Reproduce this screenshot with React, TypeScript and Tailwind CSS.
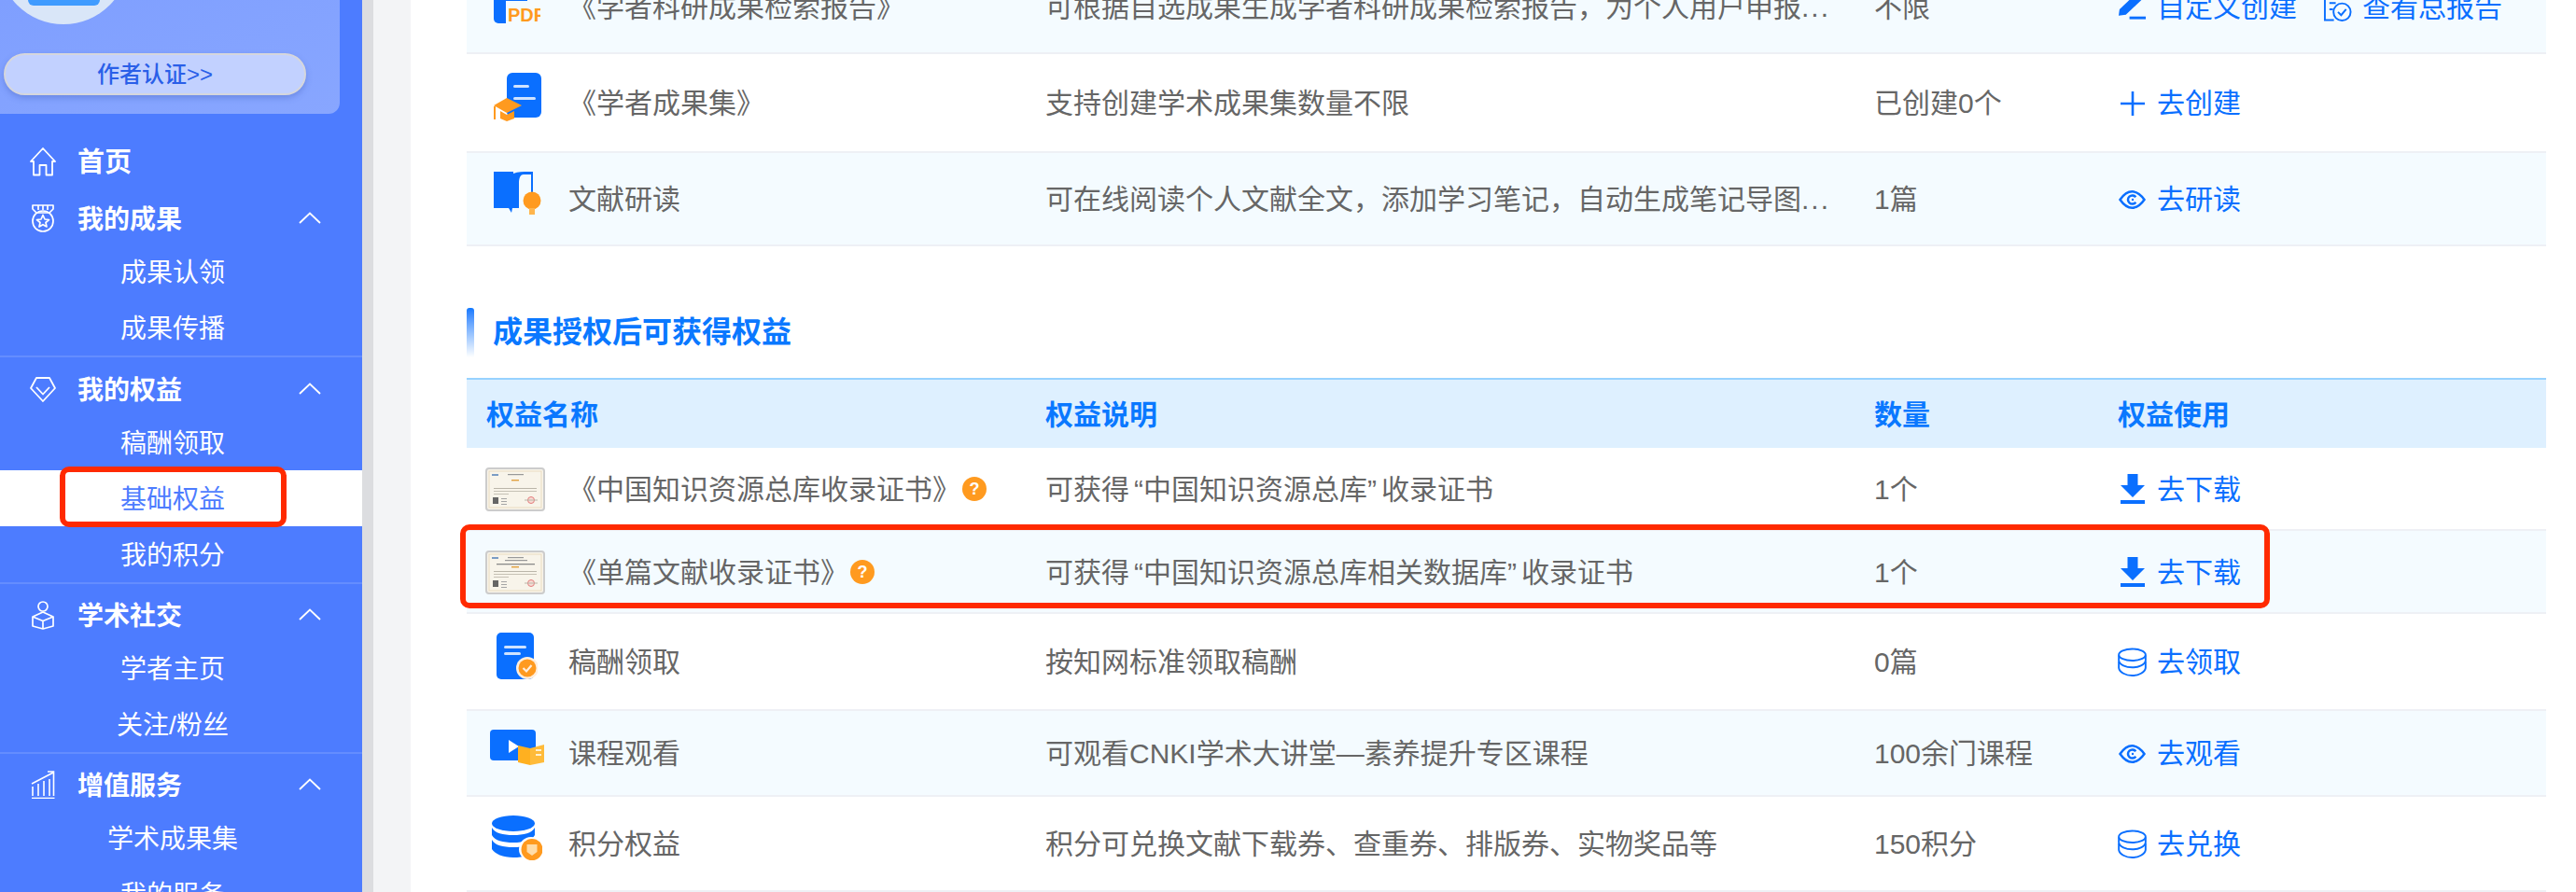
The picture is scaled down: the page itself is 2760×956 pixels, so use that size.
const ChevronUp = () => (
  <svg width="24" height="13" viewBox="0 0 24 13" fill="none" stroke="white" strokeWidth="1.8">
    <path d="M1 12 L12 1.5 L23 12" />
  </svg>
);

const HomeIcon = () => (
  <svg width="28" height="31" viewBox="0 0 28 31" fill="none" stroke="white" strokeWidth="1.8" strokeLinejoin="round">
    <path d="M14 1 L27 15 H24 V29.5 H17.5 V19 H10.5 V29.5 H4 V15 H1 Z" />
  </svg>
);

const MedalIcon = () => (
  <svg width="24" height="30" viewBox="0 0 24 30" fill="none" stroke="white" strokeWidth="1.7" strokeLinejoin="round">
    <path d="M1 1 H23 V5 L19 9 H5 L1 5 Z M7 1 V6 M12 1 V6 M17 1 V6" />
    <circle cx="12" cy="18" r="11" />
    <path d="M12 11.5 L14 16 L18.5 16.5 L15 19.5 L16 24 L12 21.7 L8 24 L9 19.5 L5.5 16.5 L10 16 Z" />
  </svg>
);

const GemIcon = () => (
  <svg width="28" height="27" viewBox="0 0 28 27" fill="none" stroke="white" strokeWidth="1.8" strokeLinejoin="round">
    <path d="M7 1 H21 L27 12 L14 26 L1 12 Z" />
    <path d="M7 11 L14 18.5 L21 11" />
  </svg>
);

const SocialIcon = () => (
  <svg width="24" height="31" viewBox="0 0 24 31" fill="none" stroke="white" strokeWidth="1.7" strokeLinejoin="round">
    <circle cx="12" cy="6" r="5" />
    <path d="M12 12 L23 17 V27 L12 30 L1 27 V17 Z" />
    <path d="M1 17 L12 21.5 L23 17 M12 21.5 V30" />
  </svg>
);

const ChartIcon = () => (
  <svg width="26" height="30" viewBox="0 0 26 30" fill="none" stroke="white" strokeWidth="1.6">
    <path d="M1 14 L24 2 M18 1 H24.5 V7" />
    <path d="M2 27 V17 M8 27 V14 M14 27 V11 M20 27 V9 M24.5 27 V7" />
    <path d="M1 29.5 H25.5" />
  </svg>
);

const PlusIcon = () => (
  <svg width="28" height="28" viewBox="0 0 28 28" fill="none" stroke="#0a6fff" strokeWidth="2.6">
    <path d="M14 1 V27 M1 14 H27" />
  </svg>
);

const EyeIcon = () => (
  <svg width="29" height="20" viewBox="0 0 29 20" fill="none" stroke="#0a6fff" strokeWidth="2.5" strokeLinejoin="miter">
    <path d="M1.5 10 C6 3.5 10 1.3 14.5 1.3 C19 1.3 23 3.5 27.5 10 C23 16.5 19 18.7 14.5 18.7 C10 18.7 6 16.5 1.5 10 Z" />
    <path d="M18.3 7.3 A4.6 4.6 0 1 0 18.3 12.7" />
    <circle cx="15" cy="10" r="1.2" fill="#0a6fff" stroke="none" />
  </svg>
);

const DownloadIcon = () => (
  <svg width="28" height="32" viewBox="0 0 28 32" fill="#0a6fff">
    <path d="M8.5 0 H19.5 V12 H27 L14 25 L1 12 H8.5 Z" />
    <rect x="1" y="28" width="26" height="4" />
  </svg>
);

const DatabaseIcon = () => (
  <svg width="32" height="32" viewBox="0 0 32 32" fill="none" stroke="#0a6fff" strokeWidth="2">
    <ellipse cx="16" cy="7.5" rx="14.8" ry="6.5" />
    <path d="M1.2 8 V14 C2 18.5 9 21.5 16 21.5 C23 21.5 30 18.5 30.8 14 V8" />
    <path d="M1.2 15 V22 C2 27 9 30.5 16 30.5 C23 30.5 30 27 30.8 22 V15" />
  </svg>
);

const PenIcon = () => (
  <svg width="32" height="32" viewBox="0 0 32 32" fill="#0a6fff">
    <path d="M20 1 L27 7 L9 24 L1 25 L2 18 Z" />
    <rect x="13" y="26" width="18" height="3" />
  </svg>
);

const ReportIcon = () => (
  <svg width="32" height="32" viewBox="0 0 32 32" fill="none" stroke="#0a6fff" strokeWidth="2">
    <path d="M22 3 H2 V30 H12" />
    <path d="M7 11 H14 M7 18 H11" />
    <circle cx="21" cy="21" r="9.5" />
    <path d="M16.5 21 L20 24.5 L25.5 18" />
  </svg>
);

const PdfIcon = () => (
  <svg width="50" height="48" viewBox="0 0 50 48">
    <rect x="0" y="0" width="36" height="48" rx="5" fill="#0a6fff" />
    <rect x="13" y="24" width="37" height="24" fill="#f4fbff" />
    <text x="15" y="46" fontSize="20" fontWeight="700" fill="#ff9a1f" fontFamily="Liberation Sans">PDF</text>
  </svg>
);

const HatIcon = () => (
  <svg width="52" height="52" viewBox="0 0 52 52">
    <rect x="15" y="0" width="37" height="48" rx="6" fill="#0a6fff" />
    <rect x="22" y="13" width="17" height="3" rx="1.5" fill="#cfe3ff" />
    <rect x="22" y="26" width="24" height="3" rx="1.5" fill="#cfe3ff" />
    <path d="M1 35 L15 27 L31 35 L15 43 Z" fill="#ff9a1f" />
    <path d="M8 41 L15 45 L23 41 V49 L15 52 L8 49 Z" fill="#ff9a1f" />
    <rect x="1" y="36" width="2" height="14" fill="#ff9a1f" />
  </svg>
);

const ReadIcon = () => (
  <svg width="51" height="46" viewBox="0 0 51 46">
    <path d="M0 0 H21 V39 H20 L19 44 L16 39 H0 Z" fill="#0a6fff" />
    <path d="M21 2 C26 0 32 0 36 0 H42 V22 H40 V3 H32 C28 3 27 8 27 12 V39 H21 Z" fill="#0a6fff" />
    <circle cx="41" cy="31" r="9.5" fill="#ff9a1f" />
    <rect x="38" y="39" width="6" height="7" fill="#ffb54d" />
  </svg>
);

const RewardIcon = () => (
  <svg width="44" height="50" viewBox="0 0 44 50">
    <rect x="0" y="0" width="40" height="50" rx="5" fill="#0a6fff" />
    <rect x="8" y="14" width="24" height="3" rx="1.5" fill="#cfe3ff" />
    <rect x="8" y="21" width="18" height="3" rx="1.5" fill="#cfe3ff" />
    <circle cx="33" cy="38" r="12" fill="#ffeedd" />
    <circle cx="33" cy="38" r="9.5" fill="#ff9a1f" />
    <path d="M28.5 38 L32 41.5 L37.5 35" fill="none" stroke="#ffeedd" strokeWidth="2.2" />
  </svg>
);

const CourseIcon = () => (
  <svg width="58" height="38" viewBox="0 0 58 38">
    <rect x="0" y="0" width="49" height="33" rx="4" fill="#0a6fff" />
    <path d="M20 11 L31 18 L20 25 Z" fill="white" />
    <path d="M30 17 L43 20 V38 L30 35 Z" fill="#ffb020" />
    <path d="M43 20 L58 16 V35 L43 38 Z" fill="#ffbb3a" />
    <rect x="49" y="21" width="6" height="2" fill="#fff0d0" />
    <rect x="49" y="26" width="6" height="2" fill="#fff0d0" />
  </svg>
);

const CoinDbIcon = () => (
  <svg width="54" height="48" viewBox="0 0 54 48">
    <ellipse cx="23" cy="8.5" rx="23" ry="8.5" fill="#0a6fff" />
    <path d="M0 13 C3 19 12 21 23 21 C34 21 43 19 46 13 V21 C43 27 34 29 23 29 C12 29 3 27 0 21 Z" fill="#0a6fff" />
    <path d="M0 26 C3 32 12 34 23 34 C34 34 43 32 46 26 V33 C43 43 34 45 23 45 C12 45 3 41 0 36 Z" fill="#0a6fff" />
    <circle cx="42" cy="36" r="13" fill="white" />
    <circle cx="43" cy="36.5" r="11.5" fill="#ff9a1f" />
    <path d="M37.5 31 H48.5 V39 L43 43 L37.5 39 Z" fill="#ffdca8" />
  </svg>
);

const Cert = ({ long }: { long?: boolean }) => (
  <svg width="64" height="47" viewBox="0 0 64 47" className="shrink-0">
    <rect x="1" y="1" width="62" height="45" rx="3" fill="#f8f4ea" stroke="#cccccc" strokeWidth="2" />
    <rect x="4" y="4" width="56" height="39" fill="none" stroke="#eadcc0" strokeWidth="1" />
    <rect x="7" y="7" width="7" height="2" fill="#7b9cc4" />
    <rect x="24" y="7" width="17" height="1.2" fill="#999999" />
    {long && <rect x="21" y="10" width="24" height="1.2" fill="#999999" />}
    {long && <rect x="12" y="14" width="41" height="1.3" fill="#8a8a8a" />}
    <rect x="28" y={long ? 17 : 13} width="8" height="1.4" fill="#e0a040" />
    <rect x="9" y="22" width="46" height="1" fill="#bbb6aa" />
    <rect x="9" y="25" width="46" height="1" fill="#c6c1b5" />
    <rect x="9" y="28" width="16" height="1" fill="#c6c1b5" />
    <rect x="8" y="32" width="6" height="7" fill="#666666" />
    <rect x="17" y="33" width="6" height="1" fill="#a5a5a5" />
    <rect x="17" y="36" width="6" height="1" fill="#a5a5a5" />
    <rect x="17" y="39" width="6" height="1" fill="#a5a5a5" />
    <circle cx="49" cy="35" r="3.5" fill="#f6dcd4" stroke="#e57b7b" strokeWidth="1" />
    <rect x="42" y="34.5" width="14" height="1" fill="#bbb6aa" />
  </svg>
);

const Help = () => (
  <span className="ml-[2px] flex h-[26px] w-[26px] shrink-0 items-center justify-center rounded-full bg-[#ff9a1f] text-[18px] font-bold leading-none text-white">
    ?
  </span>
);

const RedBox = ({ className }: { className: string }) => (
  <div className={`pointer-events-none absolute rounded-[10px] border-[6px] border-[#ff2a00] ${className}`} />
);

const topRows = [
  {
    icon: <PdfIcon />,
    name: "《学者科研成果检索报告》",
    desc: "可根据自选成果生成学者科研成果检索报告，为个人用户申报",
    more: true,
    count: "不限",
    h: "h-[100px]",
    bg: "bg-[#f4fbff]",
    actions: [
      { icon: <PenIcon />, label: "自定义创建" },
      { icon: <ReportIcon />, label: "查看总报告" },
    ],
  },
  {
    icon: <HatIcon />,
    name: "《学者成果集》",
    desc: "支持创建学术成果集数量不限",
    count: "已创建0个",
    h: "h-[106px]",
    bg: "bg-white",
    actions: [{ icon: <PlusIcon />, label: "去创建" }],
  },
  {
    icon: <ReadIcon />,
    name: "文献研读",
    desc: "可在线阅读个人文献全文，添加学习笔记，自动生成笔记导图",
    more: true,
    count: "1篇",
    h: "h-[100px]",
    bg: "bg-[#f4fbff]",
    actions: [{ icon: <EyeIcon />, label: "去研读" }],
  },
];

const bottomRows = [
  {
    icon: <RewardIcon />,
    name: "稿酬领取",
    desc: "按知网标准领取稿酬",
    count: "0篇",
    h: "h-[104px]",
    bg: "bg-white",
    actions: [{ icon: <DatabaseIcon />, label: "去领取" }],
  },
  {
    icon: <CourseIcon />,
    name: "课程观看",
    desc: "可观看CNKI学术大讲堂—素养提升专区课程",
    count: "100余门课程",
    h: "h-[92px]",
    bg: "bg-[#f4fbff]",
    actions: [{ icon: <EyeIcon />, label: "去观看" }],
  },
  {
    icon: <CoinDbIcon />,
    name: "积分权益",
    desc: "积分可兑换文献下载券、查重券、排版券、实物奖品等",
    count: "150积分",
    h: "h-[102px]",
    bg: "bg-white",
    actions: [{ icon: <DatabaseIcon />, label: "去兑换" }],
  },
];

type RowData = (typeof topRows)[number];

const grid = "grid grid-cols-[620px_888px_261px_459px] items-center pt-[1px]";

const Actions = ({ items }: { items: RowData["actions"] }) => (
  <div className="flex items-center gap-[28px] text-[#0a6fff]">
    {items.map((a) => (
      <span key={a.label} className="flex items-center gap-[11px]">
        <span className="flex w-[31px] justify-center">{a.icon}</span>
        {a.label}
      </span>
    ))}
  </div>
);

const Row = ({ row }: { row: RowData }) => (
  <div className={`${grid} ${row.h} ${row.bg} border-b-2 border-[#eef0f5]`}>
    <div className="flex items-center">
      <span className="mb-[13px] ml-[24px] flex w-[60px] justify-center">{row.icon}</span>
      <span className="ml-[25px]">{row.name}</span>
    </div>
    <div>
      {row.desc}
      {row.more && <span className="tracking-[2px]">...</span>}
    </div>
    <div>{row.count}</div>
    <Actions items={row.actions} />
  </div>
);

const CertRow = ({
  long,
  name,
  lib,
  bg,
  boxed,
}: {
  long?: boolean;
  name: string;
  lib: string;
  bg: string;
  boxed?: boolean;
}) => (
  <div className={`${grid} relative h-[89px] ${bg} border-b-2 border-[#eef0f5]`}>
    <div className="flex items-center">
      <span className="ml-[20px]">
        <Cert long={long} />
      </span>
      <span className="ml-[25px]">{name}</span>
      <Help />
    </div>
    <div>
      可获得<span className="ml-[5px]">“</span>
      {lib}
      <span className="mr-[5px]">”</span>收录证书
    </div>
    <div>1个</div>
    <Actions items={[{ icon: <DownloadIcon />, label: "去下载" }]} />
    {boxed && <RedBox className="-left-[7px] -top-[7px] h-[90px] w-[1939px]" />}
  </div>
);

const NavTitle = ({ icon, label, arrow, size }: { icon: React.ReactNode; label: string; arrow?: boolean; size?: string }) => (
  <div className="flex h-[54px] items-center font-bold text-white">
    <span className="ml-[32px] flex w-[28px] justify-center">{icon}</span>
    <span className={`ml-[23px] pt-[4px] ${size ?? ""}`}>{label}</span>
    {arrow && (
      <span className="ml-auto mr-[44px] mb-[2px]">
        <ChevronUp />
      </span>
    )}
  </div>
);

const NavSub = ({ label, active }: { label: string; active?: boolean }) => (
  <div className={`relative h-[60px] pr-[18px] pt-[4px] text-center leading-[56px] ${active ? "bg-white text-[#4d7cff]" : "text-white"}`}>
    {label}
    {active && <RedBox className="left-[64px] -top-[4px] h-[65px] w-[243px]" />}
  </div>
);

const Sidebar = () => (
  <aside className="h-full w-[388px] shrink-0 overflow-hidden bg-[#4d7cff] text-[28px]">
    <div className="relative h-[122px] w-[364px] overflow-hidden rounded-br-[12px] bg-gradient-to-br from-[#7f9fff] to-[#88a6ff] pt-[57px]">
      <div className="absolute left-[-2px] top-[-114px] h-[140px] w-[140px] overflow-hidden rounded-full bg-[#d9e6f8]">
        <div className="absolute bottom-[20px] left-[32px] h-[60px] w-[77px] rounded-[6px] bg-[#3f9bff]" />
      </div>
      <div className="relative ml-[4px] flex h-[45px] w-[324px] items-center justify-center rounded-full border-2 border-[#d5d6dc] bg-[#c2d1ff] text-[24px] font-medium text-[#2a5fe8] shadow-[0_3px_6px_rgba(60,90,180,0.35)]">
        作者认证&gt;&gt;
      </div>
    </div>
    <nav className="pt-[24px]">
      <NavTitle icon={<HomeIcon />} label="首页" size="text-[29px]" />
      <div className="mt-[7px] border-b-2 border-[#648dff]">
        <NavTitle icon={<MedalIcon />} label="我的成果" arrow />
        <NavSub label="成果认领" />
        <NavSub label="成果传播" />
      </div>
      <div className="border-b-2 border-[#648dff] pt-[7px]">
        <NavTitle icon={<GemIcon />} label="我的权益" arrow />
        <NavSub label="稿酬领取" />
        <NavSub label="基础权益" active />
        <NavSub label="我的积分" />
      </div>
      <div className="border-b-2 border-[#648dff] pt-[6px]">
        <NavTitle icon={<SocialIcon />} label="学术社交" arrow />
        <NavSub label="学者主页" />
        <NavSub label="关注/粉丝" />
      </div>
      <div className="pt-[6px]">
        <NavTitle icon={<ChartIcon />} label="增值服务" arrow />
        <NavSub label="学术成果集" />
        <NavSub label="我的服务" />
      </div>
    </nav>
  </aside>
);

export default function App() {
  return (
    <div
      lang="zh-CN"
      className="flex h-[956px] w-[2760px] overflow-hidden bg-white font-['Liberation_Sans','Noto_Sans_CJK_SC',sans-serif]"
    >
      <Sidebar />
      <div className="w-[12px] shrink-0 bg-[#dcdde0]" />
      <div className="w-[40px] shrink-0 bg-[#f3f4f6]" />
      <main className="ml-[60px] w-[2228px] text-[30px] text-[#666666]">
        <div className="-mt-[42px]">
          {topRows.map((row) => (
            <Row key={row.name} row={row} />
          ))}
        </div>

        <div className="mt-[66px] flex h-[53px] w-[8px] rounded-t-[3px] bg-gradient-to-b from-[#0a78ff] to-white">
          <h2 className="ml-[28px] whitespace-nowrap pt-[8px] text-[32px] font-bold leading-[36px] text-[#0a78ff]">
            成果授权后可获得权益
          </h2>
        </div>

        <div className={`${grid} mt-[22px] h-[75px] border-t-2 border-[#97d2ff] bg-[#def0ff] font-bold text-[#0a78ff]`}>
          <div className="pl-[21px]">权益名称</div>
          <div>权益说明</div>
          <div>数量</div>
          <div>权益使用</div>
        </div>

        <CertRow name="《中国知识资源总库收录证书》" lib="中国知识资源总库" bg="bg-white" />
        <CertRow long name="《单篇文献收录证书》" lib="中国知识资源总库相关数据库" bg="bg-[#f4fbff]" boxed />
        {bottomRows.map((row) => (
          <Row key={row.name} row={row} />
        ))}
      </main>
    </div>
  );
}
